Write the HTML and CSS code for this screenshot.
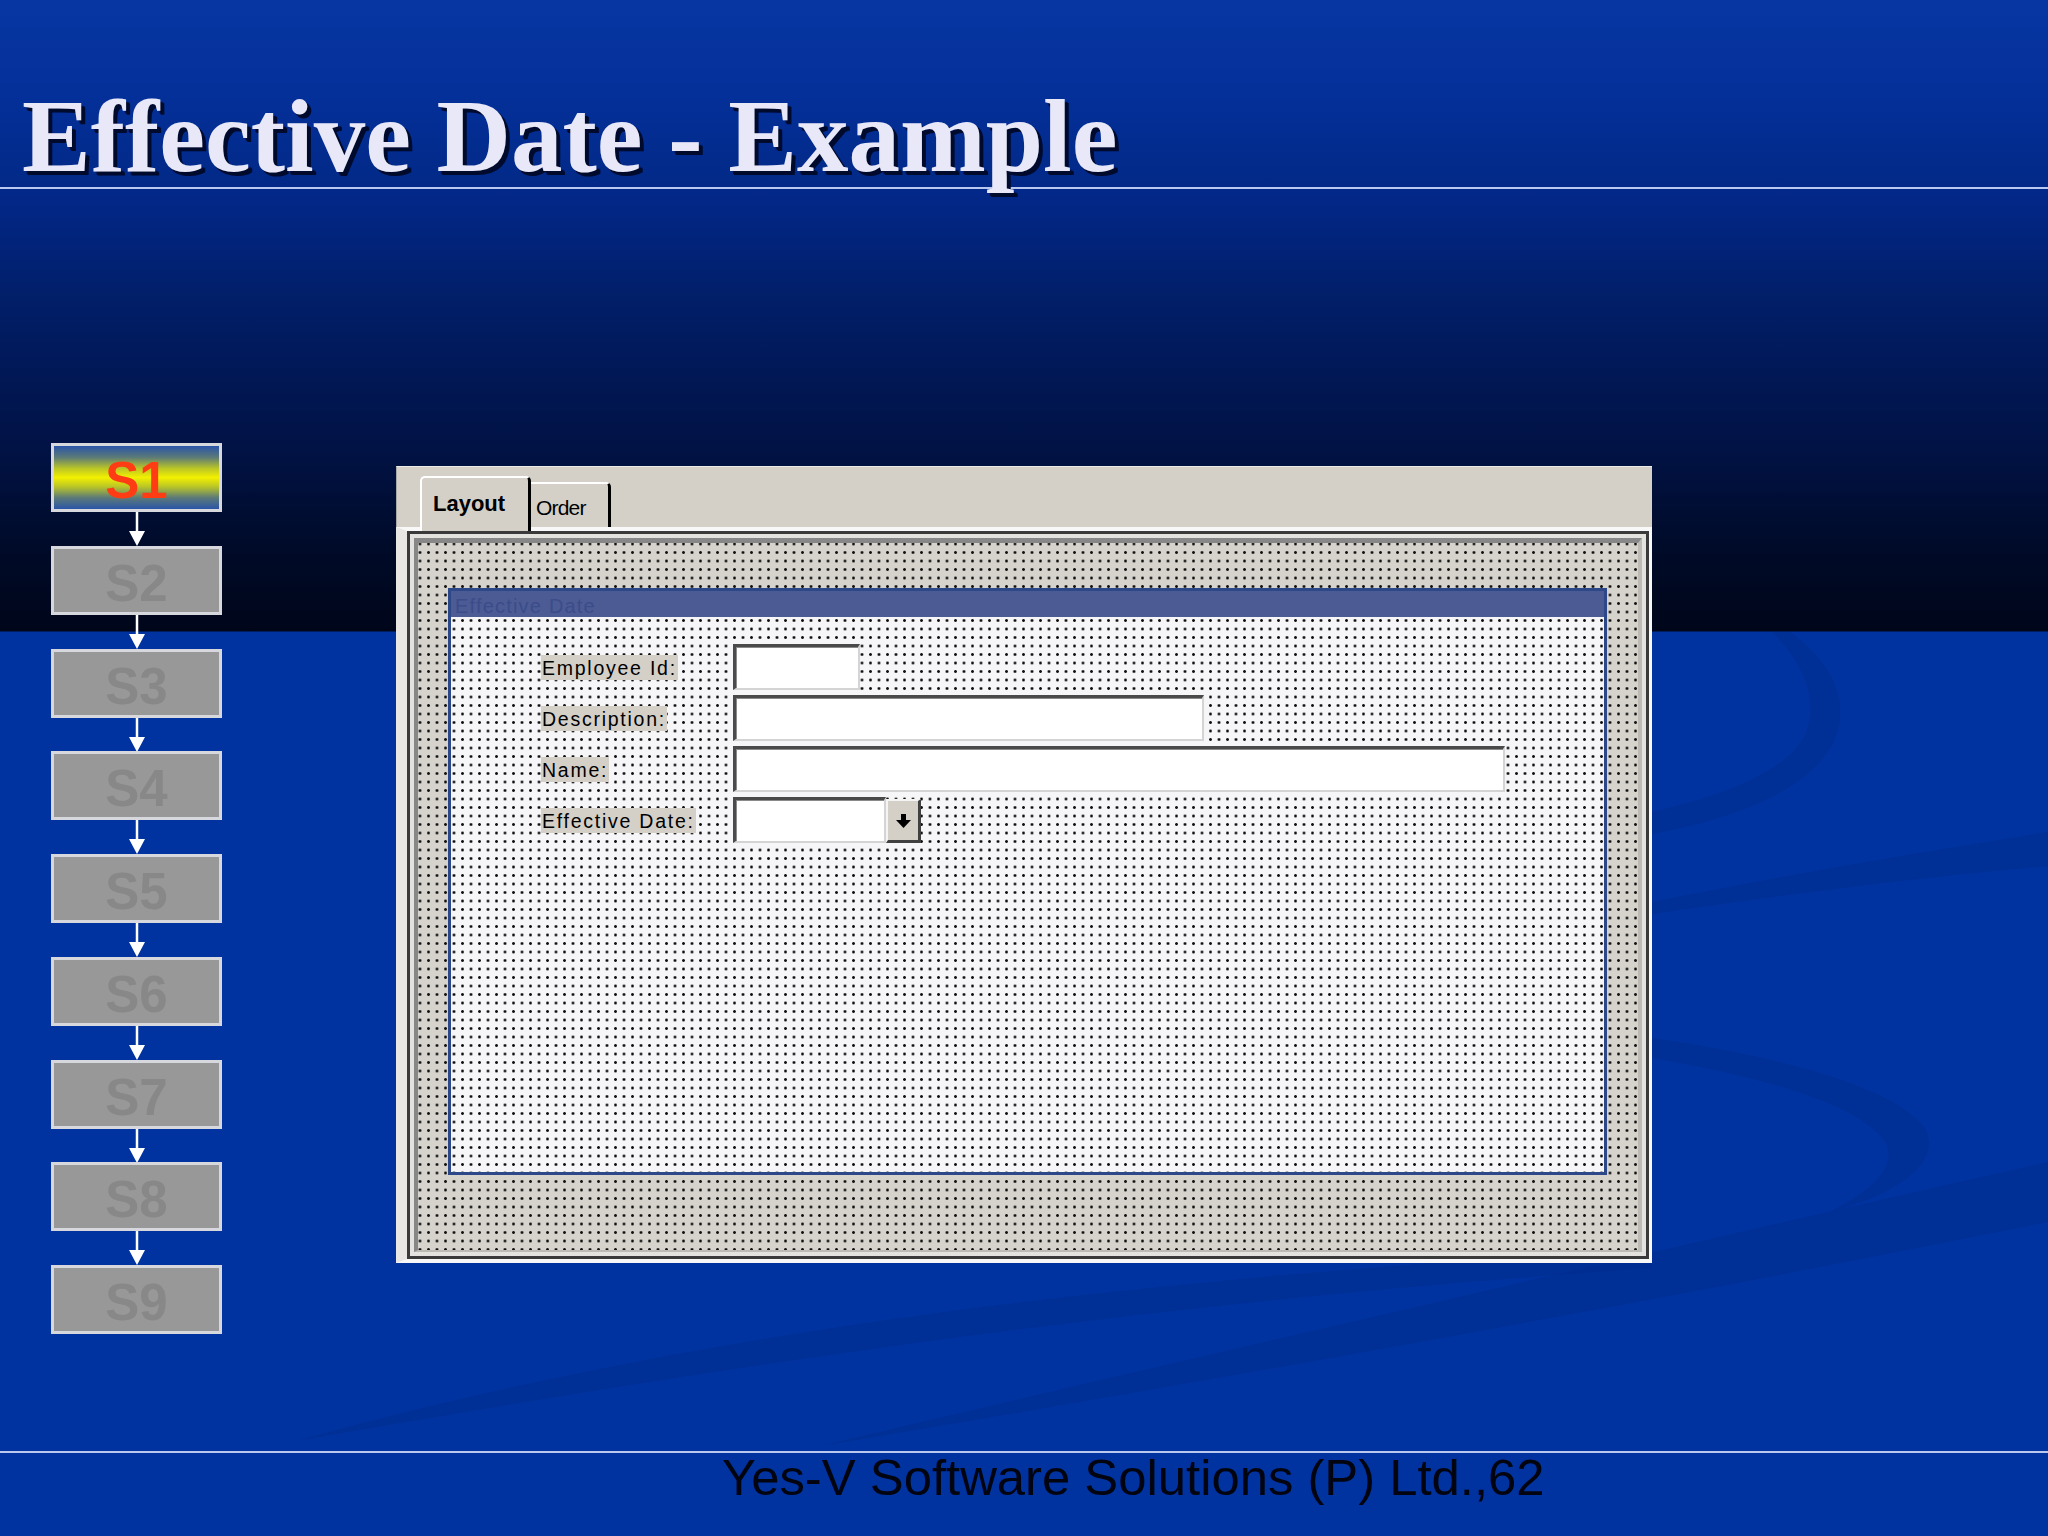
FILE: index.html
```html
<!DOCTYPE html>
<html lang="en">
<head>
<meta charset="utf-8">
<title>Effective Date - Example</title>
<link rel="stylesheet" href="styles.css">
</head>
<body>
<div class="slide">
  <svg class="swoosh" width="2048" height="1536" viewBox="0 0 2048 1536" aria-hidden="true">
    <path d="M1790 632 C1835 665 1852 705 1832 745 C1805 792 1735 818 1652 834 L1652 812 C1722 796 1788 772 1806 733 C1818 702 1806 665 1772 632 Z"/>
    <path d="M1652 902 C1800 872 1950 848 2048 832 L2048 866 C1950 874 1800 892 1652 914 Z"/>
    <path d="M1652 1038 C1790 1058 1900 1090 1926 1130 C1942 1166 1890 1196 1830 1212 C1872 1190 1900 1166 1884 1140 C1858 1104 1760 1076 1652 1058 Z"/>
    <path d="M2048 1162 L2048 1222 C1700 1292 1300 1366 820 1446 C1220 1352 1650 1252 2048 1162 Z"/>
    <path d="M300 1440 C700 1330 1100 1282 1652 1248 L1652 1268 C1150 1302 750 1362 300 1440 Z"/>
  </svg>

  <header class="title-bar">
    <h1 class="title">Effective Date - Example</h1>
  </header>

  <main class="content">
    <nav class="steps">
      <div class="step step-active">S1</div>
      <div class="connector"><svg width="20" height="34" viewBox="0 0 20 34"><line x1="10" y1="0" x2="10" y2="22" stroke="#fff" stroke-width="2.5"/><polygon points="2,19 18,19 10,34" fill="#fff"/></svg></div>
      <div class="step">S2</div>
      <div class="connector"><svg width="20" height="34" viewBox="0 0 20 34"><line x1="10" y1="0" x2="10" y2="22" stroke="#fff" stroke-width="2.5"/><polygon points="2,19 18,19 10,34" fill="#fff"/></svg></div>
      <div class="step">S3</div>
      <div class="connector"><svg width="20" height="34" viewBox="0 0 20 34"><line x1="10" y1="0" x2="10" y2="22" stroke="#fff" stroke-width="2.5"/><polygon points="2,19 18,19 10,34" fill="#fff"/></svg></div>
      <div class="step">S4</div>
      <div class="connector"><svg width="20" height="34" viewBox="0 0 20 34"><line x1="10" y1="0" x2="10" y2="22" stroke="#fff" stroke-width="2.5"/><polygon points="2,19 18,19 10,34" fill="#fff"/></svg></div>
      <div class="step">S5</div>
      <div class="connector"><svg width="20" height="34" viewBox="0 0 20 34"><line x1="10" y1="0" x2="10" y2="22" stroke="#fff" stroke-width="2.5"/><polygon points="2,19 18,19 10,34" fill="#fff"/></svg></div>
      <div class="step">S6</div>
      <div class="connector"><svg width="20" height="34" viewBox="0 0 20 34"><line x1="10" y1="0" x2="10" y2="22" stroke="#fff" stroke-width="2.5"/><polygon points="2,19 18,19 10,34" fill="#fff"/></svg></div>
      <div class="step">S7</div>
      <div class="connector"><svg width="20" height="34" viewBox="0 0 20 34"><line x1="10" y1="0" x2="10" y2="22" stroke="#fff" stroke-width="2.5"/><polygon points="2,19 18,19 10,34" fill="#fff"/></svg></div>
      <div class="step">S8</div>
      <div class="connector"><svg width="20" height="34" viewBox="0 0 20 34"><line x1="10" y1="0" x2="10" y2="22" stroke="#fff" stroke-width="2.5"/><polygon points="2,19 18,19 10,34" fill="#fff"/></svg></div>
      <div class="step">S9</div>
    </nav>

    <section class="panel">
      <div class="tabs">
        <div class="tab tab-active">Layout</div>
        <div class="tab tab-plain">Order</div>
      </div>
      <div class="page">
        <div class="frame-dark">
          <div class="frame-light">
            <div class="frame-gray">
              <div class="canvas">
                <div class="group">
                  <div class="group-title">Effective Date</div>
                  <div class="group-body">
                    <div class="form">
                      <span class="label">Employee Id:</span>
                      <div class="field"><span class="input w-id"></span></div>
                      <span class="label">Description:</span>
                      <div class="field"><span class="input w-desc"></span></div>
                      <span class="label">Name:</span>
                      <div class="field"><span class="input w-name"></span></div>
                      <span class="label">Effective Date:</span>
                      <div class="field">
                        <span class="input w-date"></span>
                        <span class="drop-btn"><svg width="15" height="14" viewBox="0 0 15 14"><rect x="5" y="0" width="5" height="6" fill="#000"/><polygon points="0,6 15,6 7.5,14" fill="#000"/></svg></span>
                      </div>
                    </div>
                  </div>
                </div>
              </div>
            </div>
          </div>
        </div>
      </div>
    </section>
  </main>

  <footer class="footer">Yes-V Software Solutions (P) Ltd.,62</footer>
</div>
</body>
</html>
```

FILE: styles.css
```css
* { box-sizing: border-box; }

html, body {
  margin: 0;
  padding: 0;
}

body {
  width: 2048px;
  height: 1536px;
  overflow: hidden;
  font-family: "Liberation Sans", Arial, sans-serif;
}

.slide {
  position: relative;
  z-index: 0;
  width: 2048px;
  height: 1536px;
  display: flex;
  flex-direction: column;
  background: linear-gradient(to bottom,
    #0736a2 0px,
    #04309a 90px,
    #022987 187px,
    #02288a 189px,
    #011e68 300px,
    #011244 450px,
    #000a26 560px,
    #00061a 631px,
    #0033a0 632px,
    #0033a0 1536px);
}

.swoosh {
  position: absolute;
  left: 0;
  top: 0;
  z-index: -1;
}

.swoosh path {
  fill: #002c8c;
  opacity: 0.5;
}

/* ---------- title ---------- */
.title-bar {
  height: 189px;
  padding: 85px 0 0 22px;
  border-bottom: 2px solid #b9c8ef;
}

.title {
  margin: 0;
  font-family: "Liberation Serif", "Times New Roman", serif;
  font-weight: bold;
  font-size: 103px;
  line-height: 102px;
  color: #e8e8f8;
  letter-spacing: 0;
  text-shadow: 4px 4px 0 #000a2c, 3px 3px 1px #000a2c;
  white-space: nowrap;
}

/* ---------- content ---------- */
.content {
  flex: 1;
  display: flex;
  align-items: flex-start;
}

.steps {
  margin: 254px 0 0 51px;
  width: 171px;
  display: flex;
  flex-direction: column;
  align-items: center;
}

.step {
  width: 171px;
  height: 69px;
  border: 3px solid #d6d8de;
  background: #989898;
  color: #888888;
  font-family: "Liberation Sans", Arial, sans-serif;
  font-weight: bold;
  font-size: 51px;
  line-height: 66px;
  text-align: center;
  padding-top: 2px;
}

.step-active {
  background: linear-gradient(to bottom,
    #2a55a8 0%,
    #5c7a78 18%,
    #b8c428 35%,
    #f2f000 50%,
    #b8c428 65%,
    #5c7a78 82%,
    #2a55a8 100%);
  color: #ff3c14;
}

.connector {
  height: 33.75px;
  width: 20px;
  display: flex;
  justify-content: center;
}

.connector svg { display: block; }

/* ---------- panel ---------- */
.panel {
  margin: 277px 0 0 174px;
  width: 1256px;
  height: 797px;
  background: #d4d0c8;
  display: flex;
  flex-direction: column;
}

.tabs {
  height: 61px;
  display: flex;
  align-items: flex-end;
  padding-left: 23px;
  border-left: 1px solid #a8a8a8;
  border-top: 1px solid #ececec;
}

.tab {
  font-family: "Liberation Sans", Arial, sans-serif;
  color: #000;
}

.tab-active {
  position: relative;
  z-index: 2;
  width: 111px;
  height: 55px;
  margin-bottom: -4px;
  background: #d4d0c8;
  border-top: 2px solid #ffffff;
  border-left: 2px solid #ffffff;
  border-right: 3px solid #000000;
  border-radius: 5px 5px 0 0;
  font-weight: bold;
  font-size: 22px;
  line-height: 22px;
  padding: 15px 0 0 11px;
}

.tab-plain {
  width: 80px;
  height: 45px;
  border-top: 2px solid #ffffff;
  border-right: 3px solid #000000;
  border-radius: 0 5px 0 0;
  font-size: 21px;
  line-height: 21px;
  letter-spacing: -0.8px;
  padding: 13px 0 0 5px;
}

.page {
  flex: 1;
  display: flex;
  border-top: 4px solid #f8f8f8;
  border-left: 11px solid #e9e7e3;
  border-right: 3px solid #f8f8f8;
  border-bottom: 4px solid #f8f8f8;
  box-shadow: inset 1px 0 0 #9a9a9a;
}

.frame-dark {
  flex: 1;
  display: flex;
  border: 3px solid #3a3a3a;
}

.frame-light {
  flex: 1;
  display: flex;
  border: 4px solid #e4e2de;
}

.frame-gray {
  flex: 1;
  display: flex;
  border-top: 5px solid #878787;
  border-left: 4px solid #878787;
  border-right: 4px solid #bdbab4;
  border-bottom: 2px solid #bdbab4;
}

.canvas {
  flex: 1;
  padding: 45px 0 0 30px;
  background-color: #d6d3cd;
  background-image: radial-gradient(circle, #111 0, #111 1.2px, transparent 1.5px);
  background-size: 8.5px 8.5px;
  background-position: 7.75px 4.25px;
  background-attachment: fixed;
}

.group {
  width: 1159px;
  height: 587px;
  border: 3px solid #2c4889;
  display: flex;
  flex-direction: column;
}

.group-title {
  height: 26px;
  background: #4c5b93;
  color: #3b4c8b;
  font-family: "Liberation Sans", Arial, sans-serif;
  font-size: 20px;
  line-height: 26px;
  letter-spacing: 1.2px;
  padding-left: 4px;
  padding-top: 2px;
}

.group-body {
  flex: 1;
  background-color: #f6f6f9;
  background-image: radial-gradient(circle, #111 0, #111 1.2px, transparent 1.5px);
  background-size: 8.5px 8.5px;
  background-position: 7.75px 4.25px;
  background-attachment: fixed;
  padding: 27px 0 0 90px;
}

.form {
  display: grid;
  grid-template-columns: 192px auto;
  row-gap: 5px;
  align-items: center;
  justify-items: start;
}

.label {
  display: inline-block;
  height: 25px;
  background: #d4d0c8;
  color: #000;
  font-family: "Liberation Sans", Arial, sans-serif;
  font-size: 19.5px;
  line-height: 26px;
  letter-spacing: 1.75px;
  padding: 0 1px;
  white-space: nowrap;
}

.field {
  display: flex;
  align-items: flex-end;
  height: 46px;
}

.input {
  display: block;
  height: 46px;
  background: #ffffff;
  border-top: 3px solid #4a4a4a;
  border-left: 3px solid #4a4a4a;
  border-right: 2px solid #d4d4d4;
  border-bottom: 2px solid #d4d4d4;
  box-shadow: inset 1px 1px 0 #8a8a8a;
}

.w-id { width: 127px; }
.w-desc { width: 471px; }
.w-name { width: 772px; }
.w-date { width: 153px; }

.drop-btn {
  width: 35px;
  height: 44px;
  background: #d4d0c8;
  border-top: 2px solid #f4f4f4;
  border-left: 2px solid #f4f4f4;
  border-right: 3px solid #404040;
  border-bottom: 3px solid #404040;
  display: flex;
  align-items: center;
  justify-content: center;
}

.drop-btn svg { display: block; }

/* ---------- footer ---------- */
.footer {
  height: 85px;
  border-top: 2px solid #b9c8ef;
  padding-left: 722px;
  font-family: "Liberation Sans", Arial, sans-serif;
  font-size: 50.8px;
  line-height: 50px;
  color: #020410;
  white-space: nowrap;
}
```
